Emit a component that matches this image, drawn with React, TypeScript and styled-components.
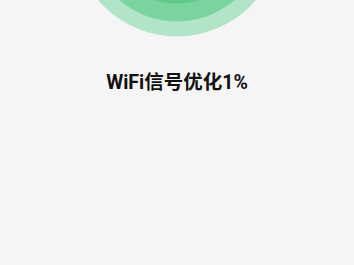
import React from "react";
import styled, { createGlobalStyle } from "styled-components";

const Global = createGlobalStyle`
  html, body { margin: 0; padding: 0; background: #f5f5f5; }
  body { font-family: Roboto, "Noto Sans CJK SC", sans-serif; }
`;

const Page = styled.div`
  width: 354px;
  height: 265px;
  background: #f5f5f5;
  display: flex;
  flex-direction: column;
  align-items: center;
  overflow: hidden;
`;

const Graphic = styled.svg`
  display: block;
  width: 354px;
  height: 40px;
  flex-shrink: 0;
`;

const Title = styled.div`
  margin-top: 30px;
  font-family: Roboto, "Noto Sans CJK SC", sans-serif;
  font-size: 19.5px;
  line-height: 26px;
  font-weight: 700;
  color: #111111;
`;

export default function App() {
  return (
    <>
      <Global />
      <Page>
        <Graphic viewBox="0 0 354 40">
          <circle cx="177" cy="-67" r="103.5" fill="#b2e5c7" />
          <circle cx="177" cy="-67" r="88.5" fill="#7ad49f" />
          <circle cx="177" cy="-67" r="70.5" fill="#5ec98a" />
        </Graphic>
        <Title>WiFi信号优化1%</Title>
      </Page>
    </>
  );
}
